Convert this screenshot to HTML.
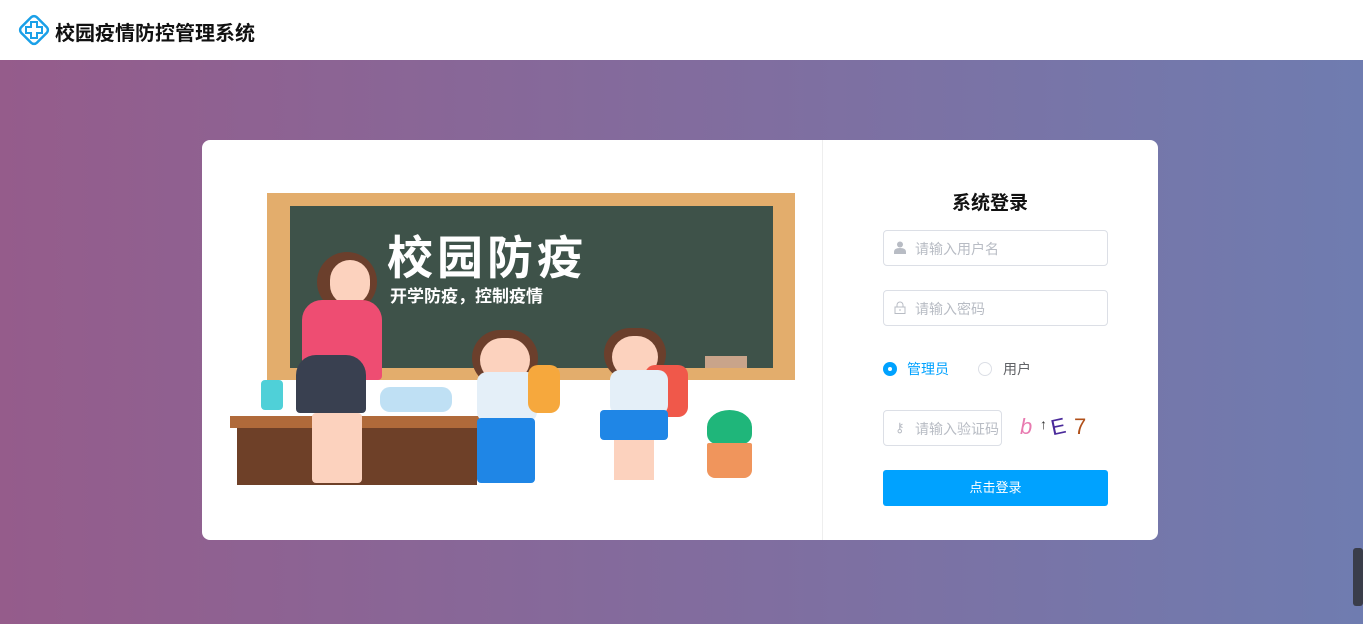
<!DOCTYPE html>
<html><head><meta charset="utf-8"><style>
*{margin:0;padding:0;box-sizing:border-box}
body{width:1363px;height:624px;overflow:hidden;font-family:"Liberation Sans","Noto Sans CJK SC",sans-serif;background:linear-gradient(90deg,#955c8b,#6f7cb0);position:relative}
.hdr{position:absolute;left:0;top:0;width:1363px;height:60px;background:#fff}
.hdr .t{position:absolute;left:55px;top:17px;font-size:20px;font-weight:bold;color:#111}
.card{position:absolute;left:202px;top:140px;width:956px;height:400px;background:#fff;border-radius:8px;overflow:hidden}
.div{position:absolute;left:620px;top:0;width:1px;height:400px;background:#eee}
.abs{position:absolute}
.inp{position:absolute;left:681px;width:225px;height:36px;border:1px solid #dcdfe6;border-radius:4px;font-size:14px;color:#b8bcc4;padding:8px 0 0 31px}
.btn{position:absolute;left:681px;top:330px;width:225px;height:36px;background:#00a2ff;border-radius:3px;color:#fff;font-size:13px;text-align:center;line-height:36px}
</style></head><body>
<div class="hdr">
<svg class="abs" style="left:18px;top:14px" width="32" height="32" viewBox="0 0 32 32"><rect x="5" y="5" width="22" height="22" rx="4" transform="rotate(45 16 16)" fill="none" stroke="#1aa0e8" stroke-width="2.5"/><path d="M13 8h6v5h5v6h-5v5h-6v-5H8v-6h5z" fill="none" stroke="#1aa0e8" stroke-width="2"/></svg>
<div class="t">校园疫情防控管理系统</div></div>
<div class="card">
<div class="abs" style="left:65px;top:53px;width:528px;height:187px;background:#e3ad6c"></div>
<div class="abs" style="left:88px;top:66px;width:483px;height:162px;background:#3e5249"></div>
<div class="abs" style="left:185px;top:82px;font-size:46px;font-weight:bold;color:#fff;letter-spacing:4px">校园防疫</div>
<div class="abs" style="left:188px;top:142px;font-size:17px;font-weight:bold;color:#fff">开学防疫，控制疫情</div>
<div class="abs" style="left:503px;top:216px;width:42px;height:12px;background:#c9a48a"></div>
<div class="abs" style="left:28px;top:276px;width:255px;height:12px;background:#b06a3a"></div>
<div class="abs" style="left:35px;top:288px;width:240px;height:57px;background:#6e4028"></div>
<div class="abs" style="left:59px;top:240px;width:22px;height:30px;background:#4fd0d8;border-radius:4px"></div>
<div class="abs" style="left:178px;top:247px;width:72px;height:25px;background:#bfe0f4;border-radius:10px"></div>
<div class="abs" style="left:115px;top:112px;width:60px;height:60px;background:#6b3f2c;border-radius:30px"></div>
<div class="abs" style="left:128px;top:120px;width:40px;height:45px;background:#fcd2be;border-radius:20px"></div>
<div class="abs" style="left:100px;top:160px;width:80px;height:80px;background:#ee4d72;border-radius:20px 20px 4px 4px"></div>
<div class="abs" style="left:94px;top:215px;width:70px;height:58px;background:#394050;border-radius:20px 20px 4px 4px"></div>
<div class="abs" style="left:110px;top:273px;width:50px;height:70px;background:#fcd2be;border-radius:4px"></div>
<div class="abs" style="left:270px;top:190px;width:66px;height:56px;background:#6b3f2c;border-radius:28px"></div>
<div class="abs" style="left:278px;top:198px;width:50px;height:44px;background:#fcd2be;border-radius:22px"></div>
<div class="abs" style="left:275px;top:232px;width:60px;height:50px;background:#e4eff8;border-radius:10px"></div>
<div class="abs" style="left:326px;top:225px;width:32px;height:48px;background:#f6a83d;border-radius:10px"></div>
<div class="abs" style="left:275px;top:278px;width:58px;height:65px;background:#1f86e6;border-radius:4px"></div>
<div class="abs" style="left:402px;top:188px;width:62px;height:52px;background:#6b3f2c;border-radius:28px"></div>
<div class="abs" style="left:410px;top:196px;width:46px;height:42px;background:#fcd2be;border-radius:22px"></div>
<div class="abs" style="left:443px;top:225px;width:43px;height:52px;background:#f0584a;border-radius:10px"></div>
<div class="abs" style="left:408px;top:230px;width:58px;height:45px;background:#e4eff8;border-radius:10px"></div>
<div class="abs" style="left:398px;top:270px;width:68px;height:30px;background:#1f86e6;border-radius:4px"></div>
<div class="abs" style="left:412px;top:300px;width:40px;height:40px;background:#fcd2be"></div>
<div class="abs" style="left:505px;top:270px;width:45px;height:34px;background:#1fb67a;border-radius:50% 50% 10px 10px"></div>
<div class="abs" style="left:505px;top:303px;width:45px;height:35px;background:#f0955c;border-radius:2px 2px 8px 8px"></div>
<div class="div"></div>
<div class="abs" style="left:620px;top:48px;width:336px;text-align:center;font-size:19px;font-weight:bold;color:#111">系统登录</div>
<div class="inp" style="top:90px">请输入用户名</div>
<svg class="abs" style="left:692px;top:101px" width="12" height="13" viewBox="0 0 12 13"><circle cx="6" cy="3.5" r="3" fill="#b8bcc4"/><path d="M0 13v-2q0-4 6-4t6 4v2z" fill="#b8bcc4"/></svg>
<div class="inp" style="top:150px">请输入密码</div>
<svg class="abs" style="left:692px;top:161px" width="12" height="13" viewBox="0 0 12 13"><rect x="1" y="6" width="10" height="6.5" fill="none" stroke="#b8bcc4"/><path d="M3 6V4a3 3 0 0 1 6 0v2" fill="none" stroke="#b8bcc4"/><path d="M6 8v2" stroke="#b8bcc4"/></svg>
<div class="abs" style="left:681px;top:222px;width:14px;height:14px;border-radius:50%;background:#00a2ff"></div>
<div class="abs" style="left:686px;top:227px;width:4px;height:4px;border-radius:50%;background:#fff"></div>
<div class="abs" style="left:705px;top:219px;font-size:14px;color:#00a2ff">管理员</div>
<div class="abs" style="left:776px;top:222px;width:14px;height:14px;border-radius:50%;border:1px solid #dcdfe6"></div>
<div class="abs" style="left:801px;top:219px;font-size:14px;color:#606266">用户</div>
<div class="inp" style="top:270px;width:119px;overflow:hidden;white-space:nowrap;padding-right:14px">请输入验证码</div>
<div class="abs" style="left:693px;top:280px;font-size:13px;color:#b8bcc4">⚷</div>
<div class="abs" style="left:818px;top:274px;font-size:22px;font-style:italic;color:#e87ab0">b</div>
<div class="abs" style="left:838px;top:276px;font-size:14px;color:#333">↑</div>
<div class="abs" style="left:849px;top:274px;font-size:22px;color:#4a2a9a;transform:rotate(-12deg)">E</div>
<div class="abs" style="left:872px;top:274px;font-size:22px;color:#b0501a">7</div>
<div class="btn">点击登录</div>
</div>
<div class="abs" style="left:1353px;top:548px;width:10px;height:58px;background:#3a3d4a;border-radius:3px"></div>
</body></html>
